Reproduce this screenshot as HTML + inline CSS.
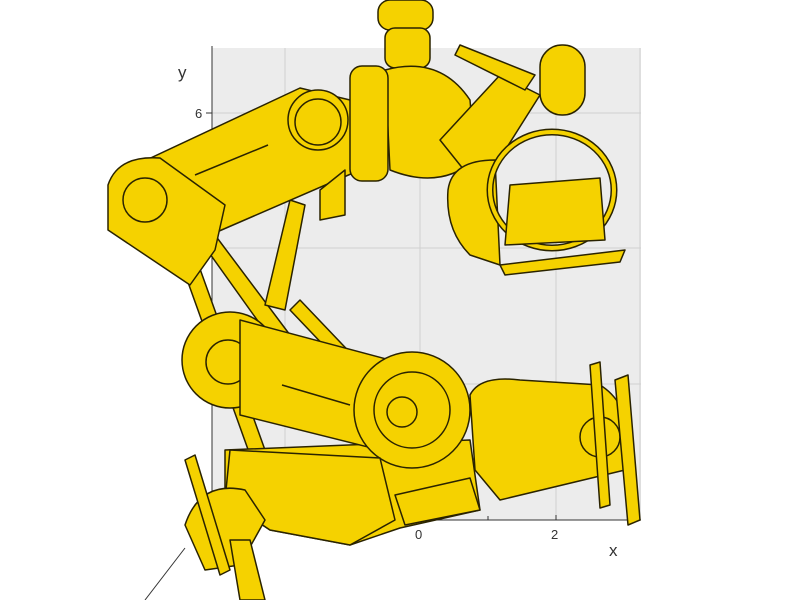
<!DOCTYPE html>
<html><head><meta charset="utf-8"><style>
html,body{margin:0;padding:0;background:#fff;width:800px;height:600px;overflow:hidden}
svg{display:block}
text{font-family:"Liberation Sans",sans-serif;fill:#333}
</style></head><body>
<svg width="800" height="600" viewBox="0 0 800 600">
<rect x="212" y="48" width="429" height="472" fill="#ececec"/>
<g stroke="#d0d0d0" stroke-width="1">
<line x1="285" y1="48" x2="285" y2="520"/><line x1="420" y1="48" x2="420" y2="520"/><line x1="556" y1="48" x2="556" y2="520"/><line x1="640" y1="48" x2="640" y2="520"/>
<line x1="212" y1="113" x2="641" y2="113"/><line x1="212" y1="248" x2="641" y2="248"/><line x1="212" y1="384" x2="641" y2="384"/>
</g>
<g stroke="#333" stroke-width="1"><line x1="212" y1="46" x2="212" y2="520"/><line x1="212" y1="520" x2="641" y2="520"/><line x1="206" y1="113" x2="212" y2="113"/><line x1="556" y1="520" x2="556" y2="515"/><line x1="488" y1="520" x2="488" y2="516"/><line x1="185" y1="548" x2="145" y2="600"/></g>
<text x="178" y="78" font-size="17">y</text><text x="195" y="118" font-size="13">6</text>
<text x="415" y="539" font-size="13">0</text><text x="551" y="539" font-size="13">2</text><text x="609" y="556" font-size="17">x</text>
<g fill="#f5d200" stroke="#2a2300" stroke-width="1.5" stroke-linejoin="round">
<!-- top neck -->
<rect x="378" y="0" width="55" height="30" rx="12"/>
<rect x="385" y="28" width="45" height="40" rx="10"/>
<!-- elbow -->
<path d="M385 70 Q440 55 470 100 L475 160 Q440 190 390 170 Z"/>
<!-- diag rods -->
<path d="M200 240 L215 235 L290 335 L275 345 Z"/>
<path d="M180 260 L195 255 L265 450 L250 455 Z"/>
<path d="M265 305 L290 200 L305 205 L285 310 Z"/>
<path d="M290 310 L300 300 L400 405 L390 415 Z"/>
<!-- upper arm -->
<path d="M125 170 L300 88 L350 100 L360 170 L210 235 Z"/>
<circle cx="318" cy="120" r="30"/><circle cx="318" cy="122" r="23"/>
<path d="M320 190 L345 170 L345 215 L320 220 Z"/>
<rect x="350" y="66" width="38" height="115" rx="12"/>
<!-- shoulder block -->
<path d="M108 185 Q118 155 160 158 L225 205 L215 250 L190 285 L108 230 Z"/>
<circle cx="145" cy="200" r="22"/>
<!-- head right -->
<path d="M440 140 L500 75 L540 95 L480 190 Z"/>
<path d="M448 190 Q452 160 495 160 L500 265 L470 255 Q445 230 448 190 Z"/>
<ellipse cx="552" cy="190" rx="62" ry="58" fill="none" stroke="#2a2300" stroke-width="7"/>
<ellipse cx="552" cy="190" rx="62" ry="58" fill="none" stroke="#f5d200" stroke-width="4"/>
<path d="M510 185 L600 178 L605 240 L505 245 Z"/>
<rect x="540" y="45" width="45" height="70" rx="22"/>
<path d="M500 265 L625 250 L620 262 L505 275 Z"/>
<path d="M460 45 L535 75 L525 90 L455 55 Z"/>
<!-- bottom mass -->
<path d="M225 450 L470 440 L480 510 L400 528 L350 545 L270 530 L225 500 Z"/>
<path d="M395 495 L470 478 L480 510 L405 525 Z"/>
<!-- lower forearm -->
<circle cx="230" cy="360" r="48"/><circle cx="228" cy="362" r="22"/>
<path d="M240 320 L390 360 L400 455 L240 415 Z"/>
<circle cx="412" cy="410" r="58"/><circle cx="412" cy="410" r="38"/><circle cx="402" cy="412" r="15"/>
<!-- right gripper -->
<path d="M470 395 Q480 375 520 380 L600 385 Q625 400 632 440 L625 470 L500 500 L475 470 Z"/>
<circle cx="600" cy="437" r="20"/>
<path d="M590 365 L600 362 L610 505 L600 508 Z"/>
<path d="M615 380 L628 375 L640 520 L628 525 Z"/>
<!-- bottom left -->
<path d="M230 450 L380 458 L395 520 L350 545 L270 530 L225 500 Z"/>
<path d="M185 525 Q200 480 245 490 L265 520 L240 565 L205 570 Z"/>
<path d="M230 540 L250 540 L265 600 L240 600 Z"/>
<path d="M185 460 L195 455 L230 570 L220 575 Z"/>
</g>
<g stroke="#2a2300" stroke-width="1.5"><line x1="195" y1="175" x2="268" y2="145"/><line x1="282" y1="385" x2="350" y2="405"/></g>
</svg>
</body></html>
